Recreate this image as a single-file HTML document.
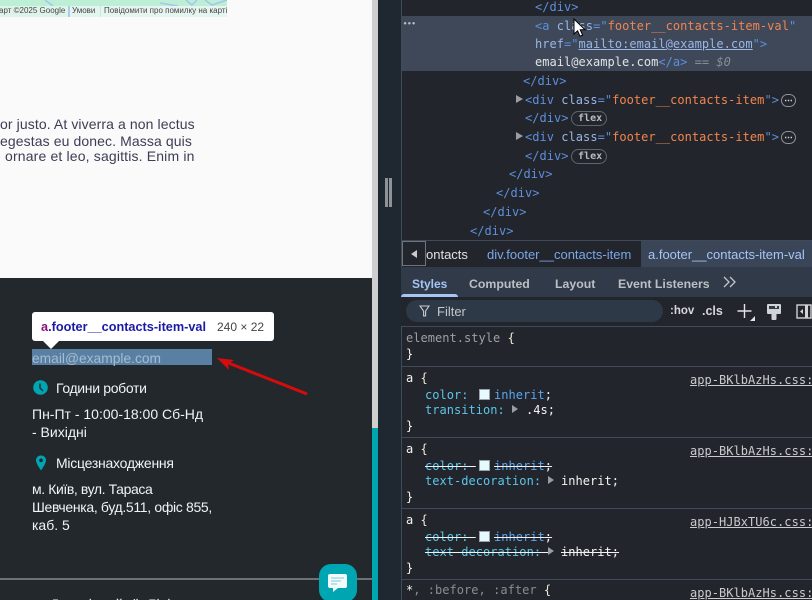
<!DOCTYPE html>
<html lang="uk">
<head>
<meta charset="utf-8">
<title>Footer</title>
<style>
html,body{margin:0;padding:0;width:812px;height:600px;overflow:hidden;background:#22252b}
*{box-sizing:border-box}
.a{position:absolute;white-space:pre}
#root{position:relative;width:812px;height:600px;overflow:hidden}
.s{font-family:"Liberation Sans",sans-serif}
.m{font-family:"DejaVu Sans Mono","Liberation Mono",monospace;font-size:12px;line-height:16px;letter-spacing:.03px}
.t{color:#5d8fdc}.n{color:#9ab6e6}.v{color:#f2854f}.w{color:#e3e3e3}
.k{color:#5cc5ea}.g{color:#8a8d93}.l{color:#bfc1c5}
.w2{color:#f4f4f4}.bl{color:#5ca5ee}.br{color:#ecebd8}
.src{color:#c9cbce;text-decoration:underline}
.dark{color:#f0f3f7;font-size:14px;line-height:18px}
.tx{color:#3d3d55;font-size:14px;line-height:16px;letter-spacing:.1px}
.bc{font-size:13px;line-height:15px}
.tb{font-size:12.3px;line-height:16px;font-weight:700;color:#bcc0c6}
.sep{position:absolute;left:401px;width:411px;height:1px;background:#414a58}
.sw{position:absolute;left:479px;width:11px;height:11px;background:#e6fafc;border:1px solid #9aa0a6}
.tri{position:absolute;width:0;height:0;border-left:7px solid #9a9da1;border-top:4.5px solid transparent;border-bottom:4.5px solid transparent}
.strike{text-decoration:line-through;text-decoration-color:#f2f2f2}
.map{font-size:8px;line-height:12px;color:#444}
.flex{color:#b8bbc0;font-size:10px;font-weight:700}
.pill{border:1px solid #5f6670;border-radius:8px}
</style>
</head>
<body>
<div id="root">
<!-- page -->
<div class="a" style="left:0;top:0;width:372px;height:278px;background:#fafafa"></div>
<div class="a" style="left:0;top:278px;width:372px;height:322px;background:#23282d"></div>
<div class="a" style="left:372px;top:0;width:6px;height:428px;background:#cfcfcf"></div>
<div class="a" style="left:372px;top:428px;width:6px;height:172px;background:#00a5b2"></div>
<div class="a" style="left:378px;top:0;width:23px;height:600px;background:#1f2730"></div>
<div class="a" style="left:401px;top:0;width:1px;height:600px;background:#414a58"></div>
<div class="a" style="left:385px;top:178px;width:3px;height:29px;background:#8f9296"></div>
<div class="a" style="left:389px;top:178px;width:3px;height:29px;background:#8f9296"></div>

<!-- map strip -->
<div class="a" style="left:0;top:0;width:227px;height:17px;background:#bdeed6"></div>
<svg class="a" style="left:0;top:0" width="227" height="6"><path d="M45 0L53 6M160 3L178 6M186 0L192 5 197 0M205 0L212 5 218 3 227 0" stroke="#a3c6ec" stroke-width="1.5" fill="none"/></svg>
<div class="a" style="left:0;top:6px;width:68px;height:11px;background:#dff3ea"></div>
<div class="a" style="left:68px;top:6px;width:2px;height:11px;background:#a9cdea"></div>
<div class="a" style="left:70px;top:6px;width:30px;height:11px;background:#e4f4ee"></div>
<div class="a" style="left:101px;top:6px;width:126px;height:11px;background:#e6f5ef"></div>
<div class="a s map" style="left:-1px;top:5px">арт ©2025 Google</div>
<div class="a s map" style="left:72px;top:5px">Умови</div>
<div class="a s map" style="left:104px;top:5px">Повідомити про помилку на карті</div>

<!-- paragraph -->
<div class="a s tx" style="left:0;top:116px">or justo. At viverra a non lectus</div>
<div class="a s tx" style="left:0;top:133px">egestas eu donec. Massa quis</div>
<div class="a s tx" style="left:5px;top:148px;letter-spacing:.16px">ornare et leo, sagittis. Enim in</div>

<!-- footer -->
<div class="a" style="left:32px;top:349px;width:180px;height:16px;background:#597fa3"></div>
<div class="a s" style="left:32px;top:350px;font-size:13.8px;line-height:17px;color:#a4bdd2">email@example.com</div>

<div class="a" style="left:32px;top:312px;width:242px;height:29px;background:#fff;border-radius:3px"></div>
<div class="a" style="left:43px;top:341px;width:0;height:0;border-left:8px solid transparent;border-right:8px solid transparent;border-top:8px solid #fff"></div>
<div class="a s" style="left:41px;top:320px;font-size:12.7px;line-height:15px;font-weight:700;color:#1a1aa6"><span style="color:#881280">a</span>.footer__contacts-item-val</div>
<div class="a s" style="left:217px;top:320px;font-size:12px;line-height:15px;color:#444">240 × 22</div>

<svg class="a" style="left:0;top:340px" width="372" height="60">
<path d="M307 54L226 22" stroke="#d50c0c" stroke-width="3" fill="none"/>
<path d="M217 18L234 20 228 24 229 30Z" fill="#d50c0c"/>
</svg>

<svg class="a" style="left:33px;top:380px" width="15" height="15" viewBox="0 0 15 15"><circle cx="7.5" cy="7.5" r="7.3" fill="#00a5b2"/><path d="M7 3.5V8L10 11" stroke="#23282d" stroke-width="1.4" fill="none"/></svg>
<div class="a s dark" style="left:56px;top:379px;letter-spacing:-.33px">Години роботи</div>
<div class="a s dark" style="left:32px;top:405px">Пн-Пт - 10:00-18:00 Сб-Нд</div>
<div class="a s dark" style="left:32px;top:423px">- Вихідні</div>

<svg class="a" style="left:35px;top:455px" width="12" height="16" viewBox="0 0 12 16"><path d="M6 0.5C2.8 0.5 1 2.8 1 5.3 1 8.8 6 15.5 6 15.5S11 8.8 11 5.3C11 2.8 9.2 0.5 6 0.5Z" fill="#00a5b2"/><circle cx="6" cy="5.3" r="1.8" fill="#23282d"/></svg>
<div class="a s dark" style="left:56px;top:454px;letter-spacing:-.25px">Місцезнаходження</div>
<div class="a s dark" style="left:32px;top:480px;letter-spacing:-.4px">м. Київ, вул. Тараса</div>
<div class="a s dark" style="left:32px;top:498px;letter-spacing:-.33px">Шевченка, буд.511, офіс 855,</div>
<div class="a s dark" style="left:32px;top:516px">каб. 5</div>

<div class="a" style="left:0;top:578px;width:372px;height:2px;background:#6e7174"></div>
<div class="a s" style="left:50px;top:596px;font-size:14px;line-height:16px;color:#f0f3f7">Дом   і    ий  (і  Яі  і</div>

<div class="a" style="left:319px;top:564px;width:38px;height:38px;border-radius:12px;background:#00a5b2"></div>
<svg class="a" style="left:328px;top:574px" width="20" height="19" viewBox="0 0 20 19"><path d="M2 0H17Q19 0 19 2V12Q19 14 17 14H10L5 18V14H2Q0 14 0 12V2Q0 0 2 0Z" fill="#f2fafb"/><path d="M3 4H16M3 7H13M3 10H9" stroke="#a5dde2" stroke-width="1.5"/></svg>

<!-- devtools elements -->
<div class="a" style="left:402px;top:16px;width:410px;height:55px;background:#3e4859"></div>
<div class="a m" style="left:403px;top:16px;color:#b9bdc4;font-size:7px;font-weight:700">•••</div>

<div class="a m" style="left:535px;top:-1px"><span class="t">&lt;/div&gt;</span></div>
<div class="a m" style="left:535px;top:18px"><span class="t">&lt;a</span> <span class="n">class</span><span class="t">="</span><span class="v">footer__contacts-item-val</span><span class="t">"</span></div>
<div class="a m" style="left:535px;top:36px"><span class="n">href</span><span class="t">="</span><span class="n" style="text-decoration:underline">mailto:email@example.com</span><span class="t">"&gt;</span></div>
<div class="a m" style="left:535px;top:54px"><span class="w">email@example.com</span><span class="t">&lt;/a&gt;</span> <span class="g">==</span> <span class="g" style="font-style:italic">$0</span></div>
<div class="a m" style="left:523px;top:73px"><span class="t">&lt;/div&gt;</span></div>

<div class="tri" style="left:516px;top:95px"></div>
<div class="a m" style="left:525px;top:92px"><span class="t">&lt;div</span> <span class="n">class</span><span class="t">="</span><span class="v">footer__contacts-item</span><span class="t">"&gt;</span></div>
<svg class="a" style="left:781px;top:94px" width="15" height="13"><rect x=".5" y=".5" width="14" height="12" rx="6" fill="none" stroke="#8e949c"/><path d="M4 6.5h1.4M6.8 6.5h1.4M9.6 6.5H11" stroke="#d0d3d8" stroke-width="1.4"/></svg>
<div class="a m" style="left:525px;top:110px"><span class="t">&lt;/div&gt;</span></div>
<div class="a pill" style="left:571px;top:111px;width:36px;height:15px"></div>
<div class="a m flex" style="left:578px;top:111px">flex</div>

<div class="tri" style="left:516px;top:132px"></div>
<div class="a m" style="left:525px;top:129px"><span class="t">&lt;div</span> <span class="n">class</span><span class="t">="</span><span class="v">footer__contacts-item</span><span class="t">"&gt;</span></div>
<svg class="a" style="left:781px;top:131px" width="15" height="13"><rect x=".5" y=".5" width="14" height="12" rx="6" fill="none" stroke="#8e949c"/><path d="M4 6.5h1.4M6.8 6.5h1.4M9.6 6.5H11" stroke="#d0d3d8" stroke-width="1.4"/></svg>
<div class="a m" style="left:525px;top:148px"><span class="t">&lt;/div&gt;</span></div>
<div class="a pill" style="left:571px;top:149px;width:36px;height:15px"></div>
<div class="a m flex" style="left:578px;top:149px">flex</div>
<div class="a m" style="left:509px;top:166px"><span class="t">&lt;/div&gt;</span></div>
<div class="a m" style="left:496px;top:185px"><span class="t">&lt;/div&gt;</span></div>
<div class="a m" style="left:483px;top:204px"><span class="t">&lt;/div&gt;</span></div>
<div class="a m" style="left:470px;top:223px"><span class="t">&lt;/div&gt;</span></div>

<!-- breadcrumbs -->
<div class="sep" style="top:240px"></div>
<div class="a" style="left:641px;top:241px;width:171px;height:26px;background:#3a4558"></div>
<div class="a s bc" style="left:426px;top:247px;color:#dfe1e4">ontacts</div>
<div class="a" style="left:402px;top:241px;width:24px;height:25px;background:#22252b;border:1px solid #70757d"></div>
<div class="a" style="left:411px;top:250px;width:0;height:0;border-right:6px solid #c9cbce;border-top:4px solid transparent;border-bottom:4px solid transparent"></div>
<div class="a s bc" style="left:487px;top:247px;color:#7aa7ea">div.footer__contacts-item</div>
<div class="a s bc" style="left:648px;top:247px;color:#a6c5f5">a.footer__contacts-item-val</div>

<!-- tabs -->
<div class="a" style="left:401px;top:267px;width:411px;height:30px;background:#303a49"></div>
<div class="a s tb" style="left:412px;top:276px;color:#a6c5f5;font-size:12px">Styles</div>
<div class="a s tb" style="left:469px;top:276px">Computed</div>
<div class="a s tb" style="left:555px;top:276px">Layout</div>
<div class="a s tb" style="left:618px;top:276px">Event Listeners</div>
<svg class="a" style="left:722px;top:276px" width="16" height="12"><path d="M2 1L7 6 2 11M8 1L13 6 8 11" stroke="#c3c6cb" stroke-width="1.3" fill="none"/></svg>
<div class="a" style="left:401px;top:294px;width:57px;height:3px;background:#a6c5f5;border-radius:3px 3px 0 0"></div>

<!-- filter bar -->
<div class="a" style="left:401px;top:297px;width:411px;height:29px;background:#22252b"></div>
<div class="a" style="left:406px;top:300px;width:257px;height:22px;background:#2e3947;border-radius:11px"></div>
<svg class="a" style="left:419px;top:305px" width="12" height="12"><path d="M1 1H10L6.6 6V11H4.6V6Z" stroke="#c9cbce" stroke-width="1.1" fill="none"/></svg>
<div class="a s" style="left:437px;top:304px;font-size:13px;line-height:16px;color:#c3c6cb">Filter</div>
<div class="a s" style="left:670px;top:304px;font-size:11.5px;line-height:15px;font-weight:700;color:#d5d7da">:hov</div>
<div class="a s" style="left:702px;top:304px;font-size:12.5px;line-height:15px;font-weight:700;color:#d5d7da">.cls</div>
<svg class="a" style="left:736px;top:303px" width="20" height="20"><path d="M1.5 8H15.5M8.5 1V15" stroke="#e3e3e3" stroke-width="1.4" fill="none"/><path d="M19 13V18H14Z" fill="#e3e3e3"/></svg>
<svg class="a" style="left:766px;top:303px" width="16" height="18"><path d="M1 2Q1 1 2 1H14Q15 1 15 2V10Q15 11 14 11H10.5V16Q10.5 17 9.5 17H6.5Q5.5 17 5.5 16V11H2Q1 11 1 10Z" fill="#d0d3d8"/><path d="M3 3H9V5H11V3H13V6H3Z" fill="#303a49"/></svg>
<svg class="a" style="left:796px;top:304px" width="16" height="16"><rect x="1" y="1" width="14" height="13" stroke="#d0d3d8" stroke-width="1.4" fill="none"/><rect x="9" y="1" width="3" height="13" fill="#d0d3d8"/><path d="M7 5V10L4 7.5Z" fill="#d0d3d8"/></svg>
<div class="sep" style="top:326px"></div>

<!-- styles -->
<div class="a m" style="left:406px;top:330px;color:#9da0a5">element.style <span class="br">{</span></div>
<div class="a m w2" style="left:406px;top:346px">}</div>
<div class="sep" style="top:366px"></div>

<div class="a m w2" style="left:406px;top:370px">a <span class="br">{</span></div>
<div class="a m src" style="left:690px;top:372px">app-BKlbAzHs.css:</div>
<div class="a m" style="left:425px;top:387px"><span class="k">color:</span></div>
<div class="sw" style="left:479px;top:389px"></div>
<div class="a m bl" style="left:494px;top:387px">inherit<span class="w2">;</span></div>
<div class="a m" style="left:425px;top:402px"><span class="k">transition:</span></div>
<div class="tri" style="left:512px;top:405px;border-left-width:6px;border-top-width:4px;border-bottom-width:4px"></div>
<div class="a m w2" style="left:526px;top:402px">.4s;</div>
<div class="a m w2" style="left:406px;top:418px">}</div>
<div class="sep" style="top:437px"></div>

<div class="a m w2" style="left:406px;top:441px">a <span class="br">{</span></div>
<div class="a m src" style="left:690px;top:443px">app-BKlbAzHs.css:</div>
<div class="a m strike" style="left:425px;top:458px"><span class="k">color:</span><span class="w2"> </span></div>
<div class="sw" style="left:479px;top:460px"></div>
<div class="a m bl strike" style="left:494px;top:458px">inherit<span class="w2">;</span></div>
<div class="a m" style="left:425px;top:473px"><span class="k">text-decoration:</span></div>
<div class="tri" style="left:548px;top:476px;border-left-width:6px;border-top-width:4px;border-bottom-width:4px"></div>
<div class="a m w2" style="left:561px;top:473px">inherit;</div>
<div class="a m w2" style="left:406px;top:489px">}</div>
<div class="sep" style="top:508px"></div>

<div class="a m w2" style="left:406px;top:512px">a <span class="br">{</span></div>
<div class="a m src" style="left:690px;top:514px">app-HJBxTU6c.css:</div>
<div class="a m strike" style="left:425px;top:529px"><span class="k">color:</span><span class="w2"> </span></div>
<div class="sw" style="left:479px;top:531px"></div>
<div class="a m bl strike" style="left:494px;top:529px">inherit<span class="w2">;</span></div>
<div class="a m strike" style="left:425px;top:544px"><span class="k">text-decoration:</span><span class="w2"> </span></div>
<div class="tri" style="left:548px;top:547px;border-left-width:6px;border-top-width:4px;border-bottom-width:4px"></div>
<div class="a m w2 strike" style="left:561px;top:544px">inherit;</div>
<div class="a m w2" style="left:406px;top:560px">}</div>
<div class="sep" style="top:579px"></div>

<div class="a m" style="left:406px;top:582px"><span class="w2">*</span><span class="g">, :before, :after</span> <span class="br">{</span></div>
<div class="a m src" style="left:690px;top:585px">app-BKlbAzHs.css:</div>

<!-- cursor -->
<svg class="a" style="left:573px;top:18px" width="14" height="20" viewBox="0 0 14 20"><path d="M1 1V16L4.6 12.8 7 18.2 9.6 17 7.2 11.8H12Z" fill="#fff" stroke="#000" stroke-width="1"/></svg>
</div>
</body>
</html>
